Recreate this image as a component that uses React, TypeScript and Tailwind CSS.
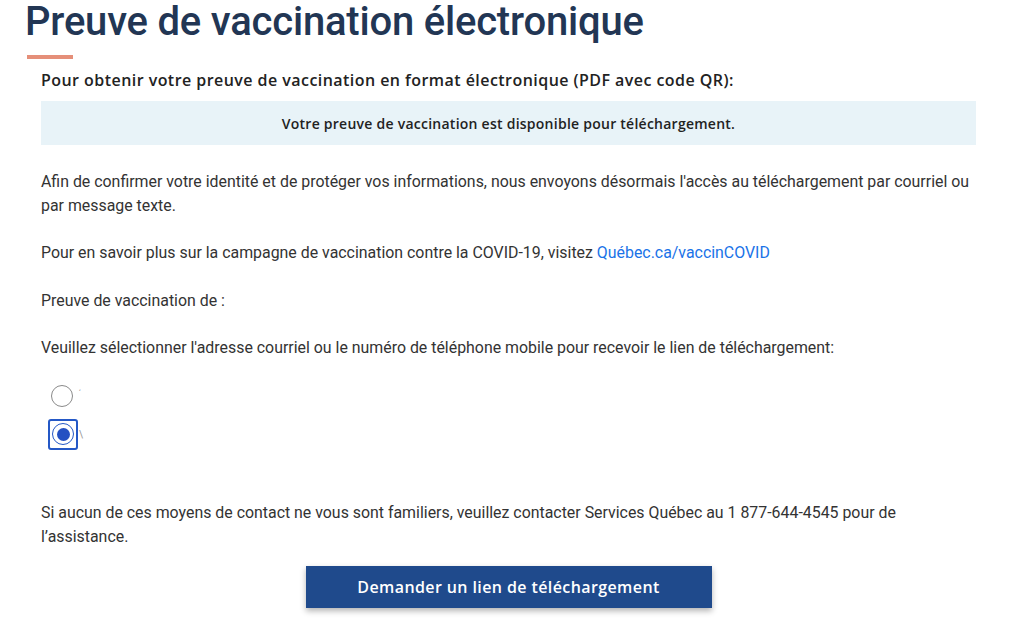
import React from 'react';

const App: React.FC = () => {
  return (
    <div className="w-[1024px] h-[644px] overflow-hidden bg-white text-[#333333]" style={{ fontFamily: 'Roboto, "Liberation Sans", sans-serif' }}>
      <div className="pl-[25px] pt-0">
        <h1 className="text-[40px] leading-[44px] font-medium text-[#223654] tracking-[-0.2px]">
          Preuve de vaccination électronique
        </h1>
        <div className="ml-[2px] mt-[11px] h-[4px] w-[46px] bg-[#e58f79]" />
      </div>

      <div className="pl-[41px] w-[976px]">
        <h2 className="mt-[11px] text-[16px] leading-[20px] font-semibold text-[#222222] tracking-[0.45px]" style={{ fontFamily: '"Open Sans", sans-serif' }}>
          Pour obtenir votre preuve de vaccination en format électronique (PDF avec code QR):
        </h2>

        <div className="mt-[11px] h-[44px] flex items-center justify-center bg-[#e8f3f8] text-[14px] font-semibold text-[#222222] tracking-[0.25px]" style={{ fontFamily: '"Open Sans", sans-serif' }}>
          Votre preuve de vaccination est disponible pour téléchargement.
        </div>

        <p className="mt-[25px] text-[15.9px] leading-[24px]">
          Afin de confirmer votre identité et de protéger vos informations, nous envoyons désormais l'accès au téléchargement par courriel ou par message texte.
        </p>

        <p className="mt-[23px] text-[15.9px] leading-[24px]">
          Pour en savoir plus sur la campagne de vaccination contre la COVID-19, visitez{' '}
          <a href="#" className="text-[#1a73e8]">Québec.ca/vaccinCOVID</a>
        </p>

        <p className="mt-[24px] text-[15.9px] leading-[24px]">Preuve de vaccination de :</p>

        <p className="mt-[23px] text-[15.9px] leading-[24px]">
          Veuillez sélectionner l'adresse courriel ou le numéro de téléphone mobile pour recevoir le lien de téléchargement:
        </p>

        <div className="mt-[23px] flex flex-col gap-[12px]">
          <label className="flex items-center h-[26px]">
            <span className="ml-[10px] w-[22px] h-[22px] rounded-full border-[1.5px] border-[#8a8a8a] bg-white" />
            <span className="ml-[6px] text-[8px] text-[#999] -mt-[6px]">‘</span>
          </label>
          <label className="flex items-center h-[26px]">
            <span className="ml-[7px] w-[30px] h-[31px] rounded-[3px] border-2 border-[#2458c6] flex items-center justify-center">
              <span className="w-[22px] h-[22px] rounded-full border-[1.5px] border-[#2458c6] flex items-center justify-center">
                <span className="w-[13px] h-[13px] rounded-full bg-[#2450c2]" />
              </span>
            </span>
            <span className="ml-[1px] text-[10px] text-[#999]">\</span>
          </label>
        </div>

        <p className="mt-[54px] text-[15.9px] leading-[24px]">
          Si aucun de ces moyens de contact ne vous sont familiers, veuillez contacter Services Québec au 1 877-644-4545 pour de l’assistance.
        </p>

        <div className="mt-[17px] flex justify-center">
          <button className="w-[406px] h-[42px] bg-[#1f4a8c] text-white text-[16px] font-semibold tracking-[0.4px] shadow-[0_3px_6px_rgba(0,0,0,0.3)]" style={{ fontFamily: '"Open Sans", sans-serif' }}>
            Demander un lien de téléchargement
          </button>
        </div>
      </div>
    </div>
  );
};

export default App;
